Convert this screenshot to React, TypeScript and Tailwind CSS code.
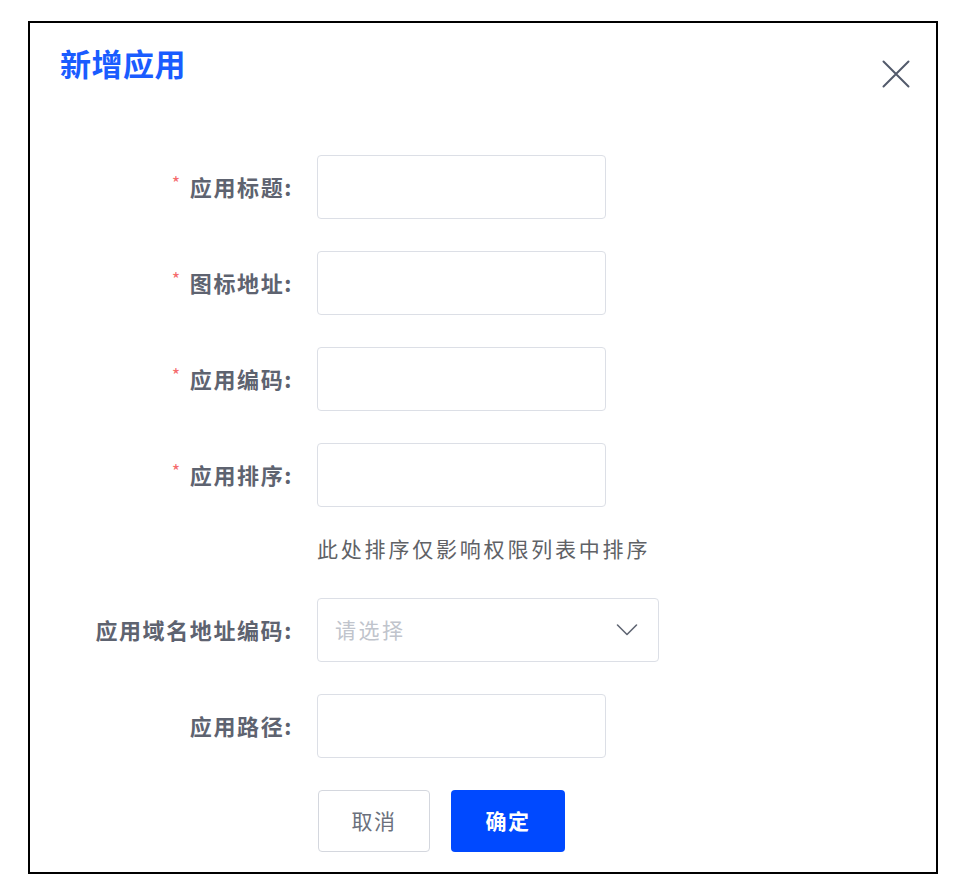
import React from 'react';

const font = { fontFamily: '"Noto Sans CJK SC", "Noto Sans", sans-serif' };

function Label({ text, required }: { text: string; required?: boolean }) {
  return (
    <div className="w-[263px] shrink-0 flex items-center justify-end -mt-[3px] text-[22px] font-bold text-[#5e6370] leading-none tracking-[1.6px]">
      {required && <span className="text-[#f56c6c] text-[18px] mr-[8px] -mt-[8px] font-normal">*</span>}
      <span>{text}:</span>
    </div>
  );
}

function TextInput() {
  return <div className="h-[64px] w-[289px] rounded-[4px] border border-[#dcdfe6] bg-white" />;
}

export default function App() {
  return (
    <div className="min-h-[884px] w-[958px] bg-white pt-[21px] pl-[28px]" style={font}>
      <div className="w-[910px] h-[853px] border-2 border-black bg-white">
        <div className="flex items-start justify-between pl-[30px] pr-[26px] pt-[18px]">
          <h1 className="text-[31px] leading-[44px] font-bold text-[#1a5cff] tracking-[0.5px]">新增应用</h1>
          <svg className="mt-[19px]" width="28" height="28" viewBox="0 0 28 28" fill="none">
            <path d="M1.5 1.5 L26.5 26.5 M26.5 1.5 L1.5 26.5" stroke="#525a6b" strokeWidth="2" strokeLinecap="round" />
          </svg>
        </div>

        <div className="mt-[67px] flex flex-col">
          <div className="flex items-center gap-[24px]">
            <Label text="应用标题" required />
            <TextInput />
          </div>
          <div className="flex items-center gap-[24px] mt-[32px]">
            <Label text="图标地址" required />
            <TextInput />
          </div>
          <div className="flex items-center gap-[24px] mt-[32px]">
            <Label text="应用编码" required />
            <TextInput />
          </div>
          <div className="flex items-center gap-[24px] mt-[32px]">
            <Label text="应用排序" required />
            <TextInput />
          </div>
          <div className="flex gap-[24px]">
            <div className="w-[263px] shrink-0" />
            <div className="mt-[25px] text-[21px] leading-[32px] text-[#606266] tracking-[2.8px]">
              此处排序仅影响权限列表中排序
            </div>
          </div>
          <div className="flex items-center gap-[24px] mt-[34px]">
            <Label text="应用域名地址编码" />
            <div className="h-[64px] w-[342px] rounded-[4px] border border-[#dcdfe6] bg-white flex items-center justify-between pl-[17px] pr-[20px]">
              <span className="text-[21px] text-[#c0c4cc] tracking-[2.5px]">请选择</span>
              <svg width="22" height="14" viewBox="0 0 22 14" fill="none">
                <path d="M1.5 2 L11 11.5 L20.5 2" stroke="#606673" strokeWidth="1.6" strokeLinecap="round" strokeLinejoin="round" />
              </svg>
            </div>
          </div>
          <div className="flex items-center gap-[24px] mt-[32px]">
            <Label text="应用路径" />
            <TextInput />
          </div>
          <div className="flex gap-[24px] mt-[32px]">
            <div className="w-[264px] shrink-0" />
            <div className="flex gap-[21px]">
              <button className="h-[62px] w-[112px] rounded-[4px] border border-[#d4d7de] bg-white text-[21px] text-[#6b707c] tracking-[1.5px]">
                取消
              </button>
              <button className="h-[62px] w-[114px] rounded-[4px] bg-[#0049ff] text-[21px] font-bold text-white tracking-[1.5px]">
                确定
              </button>
            </div>
          </div>
        </div>
      </div>
    </div>
  );
}
